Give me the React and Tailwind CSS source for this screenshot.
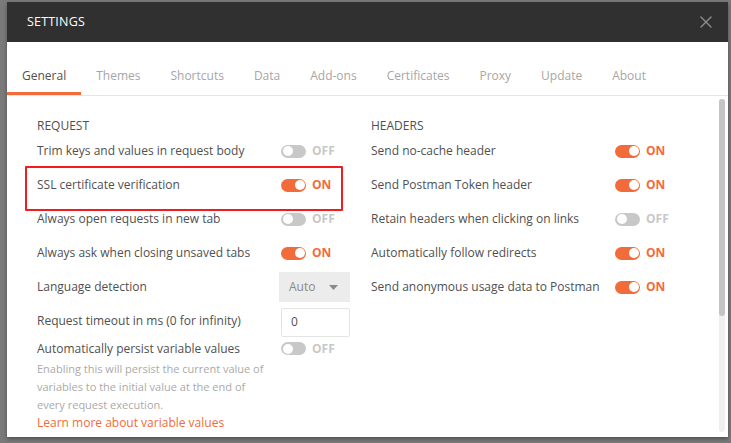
import { X } from 'lucide-react';

const tabs = ['General', 'Themes', 'Shortcuts', 'Data', 'Add-ons', 'Certificates', 'Proxy', 'Update', 'About'];

function Toggle({ on }) {
  return (
    <div className="flex items-center gap-[6px]">
      <div
        className={
          'relative w-[25px] h-[13px] rounded-full ' + (on ? 'bg-[#f26b3a]' : 'bg-[#c8c8c8]')
        }
      >
        <div
          className={
            'absolute top-[1.5px] w-[10px] h-[10px] rounded-full bg-white ' +
            (on ? 'right-[1.5px]' : 'left-[1.5px]')
          }
        />
      </div>
      <span className={'text-[12px] font-bold ' + (on ? 'text-[#f26b3a]' : 'text-[#c8c8c8]')}>
        {on ? 'ON' : 'OFF'}
      </span>
    </div>
  );
}

function Row({ label, children, h = 'h-[34px]', boxed }) {
  return (
    <div className={'relative flex items-center ' + h}>
      <div className="w-[244px] shrink-0 text-[12px] text-[#505050]">{label}</div>
      {children}
      {boxed && (
        <div className="absolute left-[-12px] right-[28px] top-[-2px] bottom-[-9px] border-2 border-[#f21c1c] rounded-[1px] pointer-events-none" />
      )}
    </div>
  );
}

export default function App() {
  return (
    <div
      className="w-[731px] h-[443px] bg-[#7a7a7a] pl-[7px] pt-[2px] overflow-hidden"
      style={{ fontFamily: '"Open Sans", "Noto Sans", sans-serif' }}
    >
      <div className="w-[721px] h-[435px] bg-white flex flex-col shadow-[0_2px_4px_rgba(0,0,0,0.35)]">
        {/* header */}
        <div className="h-[40px] shrink-0 bg-[#303030] flex items-center justify-between pl-[20px] pr-[12px]">
          <span className="text-white text-[12.5px] tracking-[0.2px]">SETTINGS</span>
          <X size={20} strokeWidth={1.6} className="text-[#8c8c8c]" />
        </div>

        {/* tabs */}
        <div className="h-[54px] shrink-0 flex items-end border-b border-[#e6e6e6]">
          {tabs.map((t, i) => (
            <div
              key={t}
              className={
                'h-[36px] px-[15px] flex items-center border-b-[3px] text-[12px] ' +
                (i === 0 ? 'border-[#f26b3a] text-[#505050]' : 'border-transparent text-[#a6a6a6]')
              }
            >
              {t}
            </div>
          ))}
        </div>

        {/* body */}
        <div className="flex-1 flex min-h-0">
          <div className="flex-1 flex pl-[30px] pt-[22px]">
            <div className="w-[334px] flex flex-col">
              <div className="h-[16px] leading-[16px] text-[12px] text-[#505050]">REQUEST</div>
              <Row label="Trim keys and values in request body"><Toggle on={false} /></Row>
              <Row label="SSL certificate verification" boxed><Toggle on /></Row>
              <Row label="Always open requests in new tab"><Toggle on={false} /></Row>
              <Row label="Always ask when closing unsaved tabs"><Toggle on /></Row>
              <Row label="Language detection">
                <div className="ml-[-2px] w-[71px] h-[30px] bg-[#ececec] flex items-center justify-between pl-[10px] pr-[12px] text-[12px] text-[#8a8a8a]">
                  <span>Auto</span>
                  <svg width="9" height="5" viewBox="0 0 9 5">
                    <path d="M0 0h9L4.5 5z" fill="#8a8a8a" />
                  </svg>
                </div>
              </Row>
              <Row label="Request timeout in ms (0 for infinity)" h="h-[33px]">
                <div className="w-[69px] h-[29px] mt-[3px] border border-[#e4e4e4] rounded-[2px] flex items-center pl-[9px] text-[12px] text-[#505050]">
                  0
                </div>
              </Row>
              <Row label="Automatically persist variable values" h="h-[23px]"><Toggle on={false} /></Row>
              <div className="w-[232px] text-[11px] leading-[18px] text-[#aaaaaa]">
                Enabling this will persist the current value of variables to the initial value at the end of
                every request execution.
              </div>
              <div className="text-[12px] leading-[18px] text-[#f26b3a]">Learn more about variable values</div>
            </div>
            <div className="w-[334px] flex flex-col">
              <div className="h-[16px] leading-[16px] text-[12px] text-[#505050]">HEADERS</div>
              <Row label="Send no-cache header"><Toggle on /></Row>
              <Row label="Send Postman Token header"><Toggle on /></Row>
              <Row label="Retain headers when clicking on links"><Toggle on={false} /></Row>
              <Row label="Automatically follow redirects"><Toggle on /></Row>
              <Row label="Send anonymous usage data to Postman"><Toggle on /></Row>
            </div>
          </div>
          {/* scrollbar */}
          <div className="w-[6px] mr-[3px] mt-[3px] mb-[5px] bg-[#efefef] rounded-full flex flex-col">
            <div className="h-[217px] bg-[#c4c4c4] rounded-full" />
          </div>
        </div>
      </div>
    </div>
  );
}
